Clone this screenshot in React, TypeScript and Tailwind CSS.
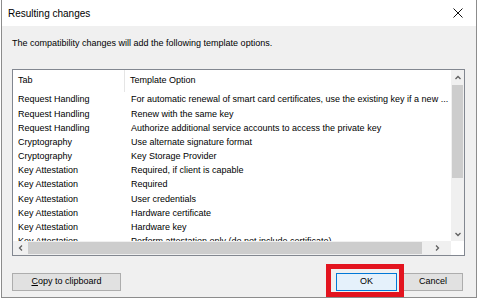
import React from 'react';

const rows: [string, string][] = [
  ['Request Handling', 'For automatic renewal of smart card certificates, use the existing key if a new ...'],
  ['Request Handling', 'Renew with the same key'],
  ['Request Handling', 'Authorize additional service accounts to access the private key'],
  ['Cryptography', 'Use alternate signature format'],
  ['Cryptography', 'Key Storage Provider'],
  ['Key Attestation', 'Required, if client is capable'],
  ['Key Attestation', 'Required'],
  ['Key Attestation', 'User credentials'],
  ['Key Attestation', 'Hardware certificate'],
  ['Key Attestation', 'Hardware key'],
  ['Key Attestation', 'Perform attestation only (do not include certificate)'],
];

const Chevron = ({ dir }: { dir: 'up' | 'down' | 'left' | 'right' }) => {
  const d = {
    up: 'M1.5 5 L4 2.5 L6.5 5',
    down: 'M1.5 3 L4 5.5 L6.5 3',
    left: 'M5 1.5 L2.5 4 L5 6.5',
    right: 'M3 1.5 L5.5 4 L3 6.5',
  }[dir];
  return (
    <svg width="8" height="8" viewBox="0 0 8 8">
      <path d={d} fill="none" stroke="#606060" strokeWidth="1.3" />
    </svg>
  );
};

const App: React.FC = () => {
  return (
    <div className="w-[478px] h-[300px] bg-white relative overflow-hidden pl-px font-['Liberation_Sans',sans-serif] text-black">
      <div className="w-[476px] h-[298px] border-x border-b border-[#8c8c8c] flex flex-col">
        {/* title bar */}
        <div className="h-[26px] bg-white flex items-center justify-between pl-[6px] pr-[13px]">
          <span className="text-[10px]">Resulting changes</span>
          <svg width="10" height="10" viewBox="0 0 10 10">
            <path d="M0.5 0.5 L9.5 9.5 M9.5 0.5 L0.5 9.5" stroke="#111" strokeWidth="1" />
          </svg>
        </div>

        <div className="flex-1 bg-[#f0f0f0] flex flex-col px-[10px]">
          <p className="pt-[11px] text-[9px] leading-[12px]">
            The compatibility changes will add the following template options.
          </p>

          {/* list view */}
          <div className="mt-[20px] w-[453px] h-[187px] border border-[#828790] bg-white flex flex-col text-[9px]">
            <div className="flex flex-1 min-h-0">
              <div className="flex-1 min-w-0 overflow-hidden">
                <div className="flex h-[22px] items-center">
                  <div className="w-[112px] pl-[5px] border-r border-[#e5e5e5] h-full flex items-center">Tab</div>
                  <div className="pl-[5px]">Template Option</div>
                </div>
                <div className="pt-px">
                  {rows.map(([tab, opt], i) => (
                    <div key={i} className="flex h-[14.2px] items-center whitespace-nowrap">
                      <div className="w-[113px] pl-[5px] shrink-0">{tab}</div>
                      <div className="pl-[5px]">{opt}</div>
                    </div>
                  ))}
                </div>
              </div>
              {/* vertical scrollbar */}
              <div className="w-[13px] bg-[#f0f0f0] flex flex-col">
                <div className="h-[15px] flex items-center justify-center">
                  <Chevron dir="up" />
                </div>
                <div className="h-[93px] bg-[#cdcdcd] mx-px" />
                <div className="flex-1" />
                <div className="h-[15px] flex items-center justify-center">
                  <Chevron dir="down" />
                </div>
              </div>
            </div>
            {/* horizontal scrollbar */}
            <div className="h-[14px] flex">
              <div className="flex-1 bg-[#f0f0f0] flex items-center">
                <div className="w-[15px] flex justify-center">
                  <Chevron dir="left" />
                </div>
                <div className="w-[394px] h-[12px] bg-[#cdcdcd]" />
                <div className="flex-1 flex justify-center">
                  <Chevron dir="right" />
                </div>
              </div>
              <div className="w-[13px] bg-white" />
            </div>
          </div>

          {/* buttons */}
          <div className="mt-[17px] flex items-center">
            <button className="w-[109px] h-[18px] bg-[#e1e1e1] border border-[#adadad] text-[9px]">
              <span className="underline">C</span>opy to clipboard
            </button>
            <div className="flex-1" />
            <button className="w-[61px] h-[18px] bg-[#e5f1fb] border border-[#0078d7] text-[9px]">OK</button>
            <button className="ml-[6px] w-[60px] h-[18px] bg-[#e1e1e1] border border-[#adadad] text-[9px]">Cancel</button>
            <div className="w-[3px]" />
          </div>
        </div>
      </div>

      {/* red highlight annotation */}
      <div className="absolute left-[326px] top-[264px] w-[78px] h-[33px] border-[5px] border-[#e3141f]" />
    </div>
  );
};

export default App;
